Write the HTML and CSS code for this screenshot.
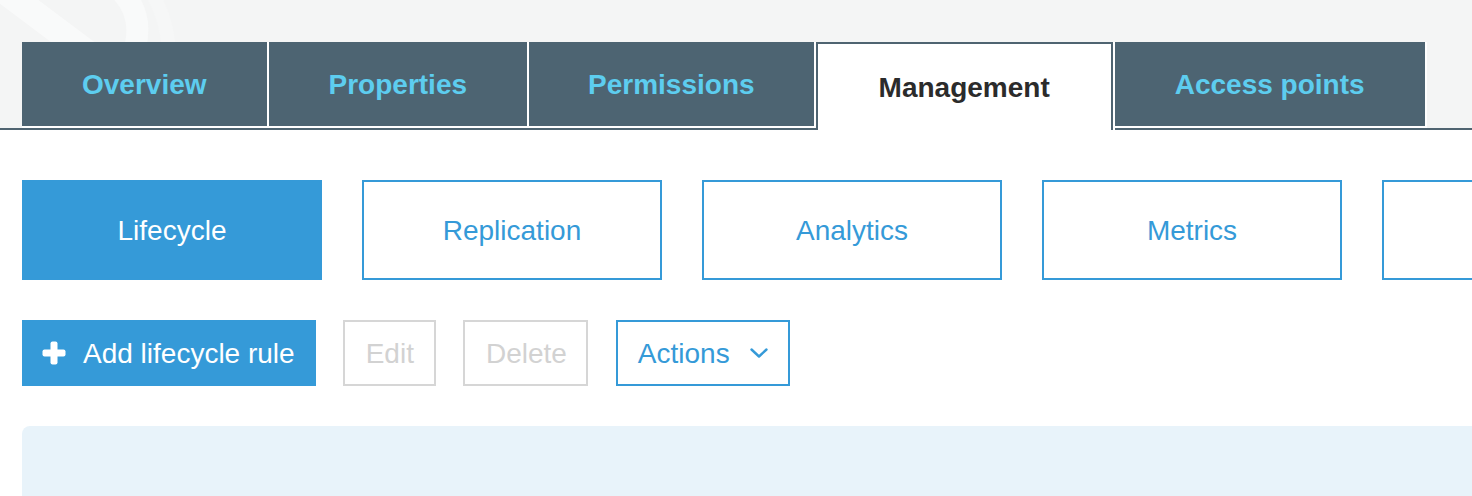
FILE: index.html
```html
<!DOCTYPE html>
<html lang="en">
<head>
<meta charset="utf-8">
<title>Management</title>
<link rel="stylesheet" href="styles.css">
</head>
<body>
<div class="page">
  <header class="header">
    <svg class="watermark" width="220" height="128" viewBox="0 0 220 128" aria-hidden="true">
      <path d="M-10 -20 L150 100" stroke="#f9fafa" stroke-width="26" fill="none"/>
      <path d="M120 -10 C150 20 140 60 100 110" stroke="#f9fafa" stroke-width="22" fill="none"/>
      <path d="M150 -10 C175 30 175 80 150 128" stroke="#f6f7f7" stroke-width="14" fill="none"/>
    </svg>
    <nav class="tabs">
      <div class="tab">Overview</div>
      <div class="tab">Properties</div>
      <div class="tab tab-narrow">Permissions</div>
      <div class="tab tab-active">Management</div>
      <div class="tab">Access points</div>
    </nav>
  </header>
  <main class="content">
    <div class="subtabs">
      <div class="subtab subtab-active">Lifecycle</div>
      <div class="subtab">Replication</div>
      <div class="subtab">Analytics</div>
      <div class="subtab">Metrics</div>
      <div class="subtab"></div>
    </div>
    <div class="actions">
      <button class="btn btn-primary">
        <svg class="plus" width="24" height="24" viewBox="0 0 24 24" aria-hidden="true">
          <rect x="8.5" y="0.5" width="7" height="23" rx="2" fill="#fff"/>
          <rect x="0.5" y="8.5" width="23" height="7" rx="2" fill="#fff"/>
        </svg>
        <span>Add lifecycle rule</span>
      </button>
      <button class="btn btn-disabled btn-edit">Edit</button>
      <button class="btn btn-disabled btn-delete">Delete</button>
      <button class="btn btn-outline">
        <span>Actions</span>
        <svg class="chev" width="18" height="11" viewBox="0 0 18 11" aria-hidden="true">
          <path d="M1.5 1.5 L9 8.5 L16.5 1.5" stroke="#359ad8" stroke-width="2.4" fill="none" stroke-linecap="round" stroke-linejoin="round"/>
        </svg>
      </button>
    </div>
    <section class="panel"></section>
  </main>
</div>
</body>
</html>
```

FILE: styles.css
```css
* { box-sizing: border-box; }

html, body {
  margin: 0;
  padding: 0;
  background: #ffffff;
  overflow: hidden;
  font-family: "Liberation Sans", Arial, sans-serif;
}

.page {
  width: 1472px;
  height: 496px;
  overflow: hidden;
}

.header {
  position: relative;
  background: #f4f5f5;
  padding-top: 42px;
}

.watermark {
  position: absolute;
  left: 0;
  top: 0;
}

.tabs {
  position: relative;
  display: flex;
  align-items: flex-start;
  padding-left: 22px;
  border-bottom: 2px solid #4f6471;
}

.tab {
  height: 86px;
  padding: 1px 60px 0 60px;
  display: flex;
  align-items: center;
  background: #4d6472;
  color: #5dcdef;
  font-size: 28px;
  font-weight: bold;
  border-right: 2px solid #ffffff;
  border-bottom: 2px solid #ffffff;
  white-space: nowrap;
}

.tab-narrow {
  padding: 1px 59px 0 59px;
}

.tab-active {
  height: 88px;
  margin-bottom: -2px;
  margin-right: 2px;
  padding: 2px 61px 0 61px;
  background: #ffffff;
  color: #2b2b2b;
  border: 2px solid #4f6471;
  border-bottom: none;
  box-shadow: 2px 0 0 #ffffff;
}

.content {
  padding: 50px 0 0 22px;
  width: 1700px;
}

.subtabs {
  display: flex;
  gap: 40px;
}

.subtab {
  width: 300px;
  height: 100px;
  padding-top: 2px;
  display: flex;
  align-items: center;
  justify-content: center;
  border: 2px solid #359ad8;
  color: #359ad8;
  font-size: 28px;
  background: #ffffff;
}

.subtab-active {
  background: #359ad8;
  color: #ffffff;
}

.actions {
  display: flex;
  gap: 27px;
  margin-top: 40px;
}

.btn {
  height: 66px;
  display: flex;
  align-items: center;
  font-family: "Liberation Sans", Arial, sans-serif;
  font-size: 28px;
  background: #ffffff;
  border: 2px solid transparent;
  padding: 2px 21px 0 21px;
  margin: 0;
  cursor: pointer;
}

.btn-primary {
  background: #359ad8;
  border-color: #359ad8;
  color: #ffffff;
  padding: 2px 19px 0 18px;
  gap: 17px;
}

.plus { margin-top: -2px; }

.btn-disabled {
  border-color: #d6d6d6;
  color: #d2d2d2;
}

.btn-edit { padding-right: 20px; }

.btn-delete { padding-right: 19px; }

.btn-outline {
  border-color: #359ad8;
  color: #359ad8;
  padding: 2px 20px 0 20px;
  gap: 20px;
  margin-left: 1px;
}

.chev { margin-top: -1px; }

.panel {
  margin-top: 40px;
  height: 120px;
  background: #e8f3fa;
  border-radius: 8px 0 0 0;
}
```
